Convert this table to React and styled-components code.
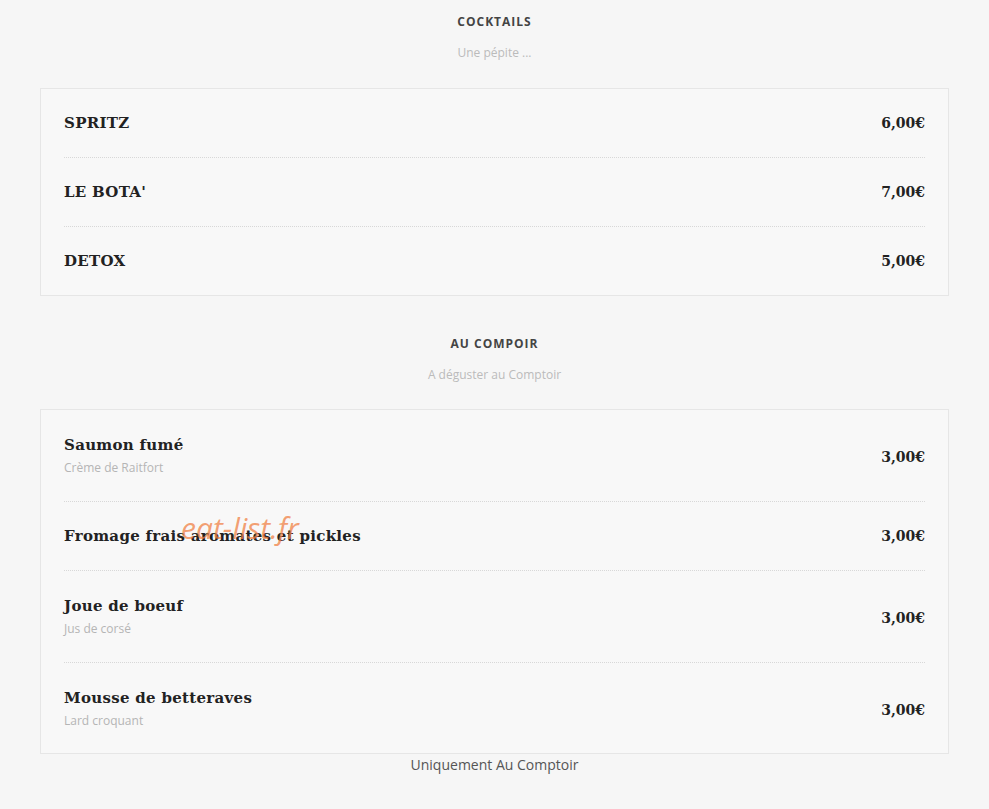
import React from 'react';
import styled, { createGlobalStyle } from 'styled-components';

const GlobalStyle = createGlobalStyle`
  body {
    margin: 0;
    background: #f6f6f6;
    font-family: "Open Sans", "Liberation Sans", sans-serif;
  }
`;

const Page = styled.div`
  position: relative;
  padding: 0 40px 20px 40px;
  width: 909px;
`;

const Section = styled.section`
  margin-top: ${p => (p.first ? '0' : '26px')};
`;

const Header = styled.header`
  padding-top: 12px;
  text-align: center;
`;

const Title = styled.h2`
  margin: 0;
  font-size: 12px;
  line-height: 20px;
  font-weight: 700;
  letter-spacing: 1px;
  color: #444;
`;

const Subtitle = styled.div`
  margin-top: 10px;
  font-size: 12px;
  line-height: 22px;
  color: #bbb;
`;

const Card = styled.div`
  margin-top: ${p => p.offset || 24}px;
  background: #f8f8f8;
  border: 1px solid #e6e6e6;
  padding: 0 23px;
`;

const Row = styled.div`
  display: flex;
  align-items: center;
  justify-content: space-between;
  padding: ${p => (p.hasDesc ? '25px 0 22px' : '24px 0')};
  border-bottom: ${p => (p.last ? 'none' : '1px dotted #d8d8d8')};
  ${p => p.last && p.hasDesc && 'padding-bottom: 21px;'}
`;

const Name = styled.div`
  font-family: "DejaVu Serif", "Liberation Serif", serif;
  font-weight: 700;
  font-size: 15px;
  line-height: 20px;
  letter-spacing: 0.3px;
  color: #222;
`;

const Desc = styled.div`
  margin-top: 2px;
  font-size: 12px;
  line-height: 22px;
  color: #b5b5b5;
`;

const Price = styled.div`
  font-family: "DejaVu Serif", "Liberation Serif", serif;
  font-weight: 700;
  font-size: 14px;
  color: #222;
`;

const Footer = styled.div`
  margin-top: 1px;
  text-align: center;
  font-size: 14px;
  line-height: 20px;
  color: #555;
`;

const Watermark = styled.div`
  position: absolute;
  left: 181px;
  top: 507px;
  font-family: "Open Sans", sans-serif;
  font-style: italic;
  font-size: 30px;
  color: rgba(240, 130, 70, 0.75);
  pointer-events: none;
`;

const cocktails = [
  { name: 'SPRITZ', price: '6,00€' },
  { name: "LE BOTA'", price: '7,00€' },
  { name: 'DETOX', price: '5,00€' },
];

const comptoir = [
  { name: 'Saumon fumé', desc: 'Crème de Raitfort', price: '3,00€' },
  { name: 'Fromage frais aromates et pickles', price: '3,00€' },
  { name: 'Joue de boeuf', desc: 'Jus de corsé', price: '3,00€' },
  { name: 'Mousse de betteraves', desc: 'Lard croquant', price: '3,00€' },
];

const MenuCard = ({ items, offset }) => (
  <Card offset={offset}>
    {items.map((it, i) => (
      <Row key={it.name} hasDesc={!!it.desc} last={i === items.length - 1}>
        <div>
          <Name>{it.name}</Name>
          {it.desc && <Desc>{it.desc}</Desc>}
        </div>
        <Price>{it.price}</Price>
      </Row>
    ))}
  </Card>
);

const App = () => (
  <Page>
    <GlobalStyle />
    <Section first>
      <Header>
        <Title>COCKTAILS</Title>
        <Subtitle>Une pépite ...</Subtitle>
      </Header>
      <MenuCard items={cocktails} />
    </Section>
    <Section>
      <Header>
        <Title>AU COMPOIR</Title>
        <Subtitle>A déguster au Comptoir</Subtitle>
      </Header>
      <MenuCard items={comptoir} offset={23} />
    </Section>
    <Footer>Uniquement Au Comptoir</Footer>
    <Watermark>eat-list.fr</Watermark>
  </Page>
);

export default App;
